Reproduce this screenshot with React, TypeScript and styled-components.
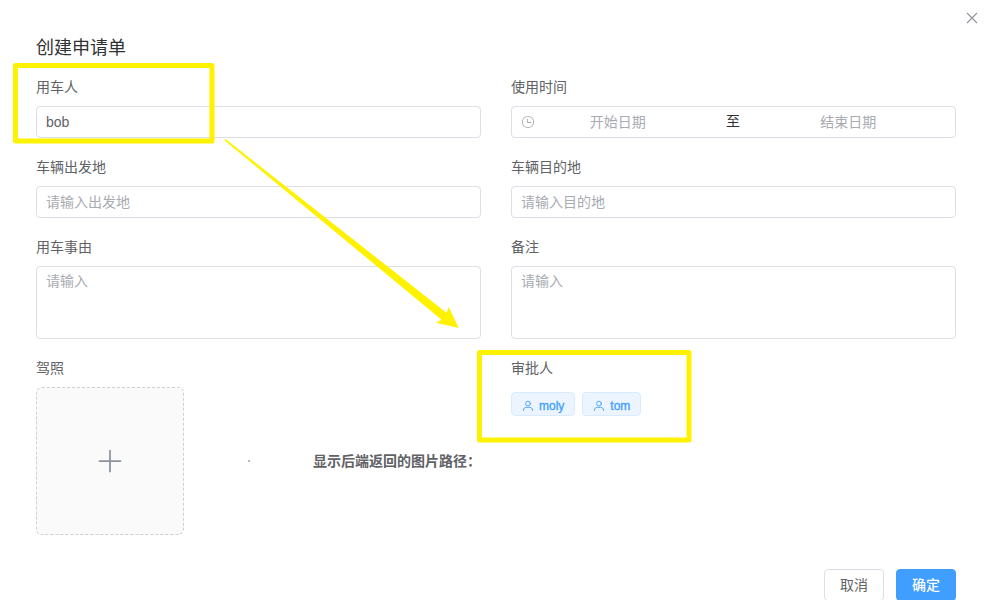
import React from 'react';
import styled, { createGlobalStyle, css } from 'styled-components';

const GlobalStyle = createGlobalStyle`
  *, *::before, *::after { box-sizing: border-box; }
  body {
    margin: 0;
    background: #fff;
    color: #606266;
    font-family: "Liberation Sans", "Noto Sans CJK SC", sans-serif;
    font-size: 14px;
  }
  button, input, textarea { font: inherit; }
`;

const Dialog = styled.main`
  position: relative;
  height: 100vh;
  overflow: hidden;
  padding: 28px 29px 0 36px;
`;

const CloseButton = styled.button`
  position: absolute;
  top: 10px;
  right: 5px;
  display: flex;
  padding: 0;
  border: 0;
  background: none;
  color: #909399;
  cursor: pointer;
`;

const Title = styled.h1`
  margin: 0;
  color: #303133;
  font-size: 18px;
  font-weight: 400;
  line-height: 40px;
`;

const Form = styled.form`
  display: grid;
  grid-template-columns: 1fr 1fr;
  gap: 10px 30px;
`;

const Field = styled.div`
  min-width: 0;
`;

const labelStyle = css`
  display: block;
  line-height: 38px;
`;

const Label = styled.label`
  ${labelStyle}
`;

const GroupLabel = styled.div`
  ${labelStyle}
`;

const boxStyle = css`
  width: 100%;
  border: 1px solid #dcdfe6;
  border-radius: 4px;
  background: #fff;
  color: #606266;
`;

const Input = styled.input`
  ${boxStyle}
  display: block;
  height: 32px;
  padding: 0 9px;
  outline: none;
  &::placeholder { color: #a8abb2; }
`;

const TextArea = styled.textarea`
  ${boxStyle}
  display: block;
  height: 73px;
  padding: 4px 9px;
  line-height: 21px;
  outline: none;
  resize: none;
  &::placeholder { color: #a8abb2; }
`;

const DateRange = styled.div`
  ${boxStyle}
  display: flex;
  align-items: center;
  height: 32px;
  padding: 0 10px 0 9px;
`;

const IconSlot = styled.span`
  display: flex;
  flex: none;
  width: 14px;
  color: #a8abb2;
`;

const DateInput = styled.input`
  width: 39%;
  height: 30px;
  padding: 0;
  border: 0;
  outline: none;
  background: none;
  text-align: center;
  &::placeholder { color: #a8abb2; }
`;

const Separator = styled.span`
  flex: 1;
  color: #303133;
  line-height: 28px;
  padding-bottom: 2px;
  text-align: center;
`;

const UploadRow = styled.div`
  display: flex;
  align-items: center;
  justify-content: space-between;
`;

const UploadBox = styled.label`
  display: flex;
  align-items: center;
  justify-content: center;
  width: 148px;
  height: 148px;
  border: 1px dashed #cdd0d6;
  border-radius: 6px;
  background: #fafafa;
  color: #8c939d;
  cursor: pointer;
`;

const FileInput = styled.input`
  position: absolute;
  width: 1px;
  height: 1px;
  opacity: 0;
`;

const Dot = styled.span`
  width: 2px;
  height: 2px;
  border-radius: 1px;
  background: #a0a2a6;
`;

const PathText = styled.strong`
  padding-bottom: 2px;
  font-weight: 700;
`;

const Tags = styled.div`
  display: flex;
  gap: 7px;
  padding-top: 5px;
`;

const Tag = styled.span`
  display: inline-flex;
  align-items: center;
  gap: 5px;
  height: 24px;
  padding: 3px 10px 0 10px;
  border: 1px solid #d9ecff;
  border-radius: 4px;
  background: #ecf5ff;
  color: #409eff;
  font-size: 12px;
  -webkit-text-stroke: 0.3px #409eff;
`;

const Footer = styled.footer`
  display: flex;
  justify-content: flex-end;
  gap: 12px;
  padding-top: 34px;
`;

const Button = styled.button<{ $primary?: boolean }>`
  height: 32px;
  padding: 0 15px 2px;
  border: 1px solid ${(p) => (p.$primary ? '#409eff' : '#dcdfe6')};
  border-radius: 4px;
  background: ${(p) => (p.$primary ? '#409eff' : '#fff')};
  color: ${(p) => (p.$primary ? '#fff' : '#606266')};
  font-weight: ${(p) => (p.$primary ? 500 : 400)};
  cursor: pointer;
`;

const Markup = styled.svg`
  position: absolute;
  top: 0;
  left: 0;
  pointer-events: none;
`;

const CloseIcon = () => (
  <svg width="16" height="16" viewBox="0 0 16 16" fill="none" stroke="currentColor" strokeWidth="1.1">
    <path d="M3 3 13 13M13 3 3 13" />
  </svg>
);

const ClockIcon = () => (
  <svg width="14" height="14" viewBox="0 0 1024 1024" fill="currentColor">
    <path d="M512 896a384 384 0 1 0 0-768 384 384 0 0 0 0 768m0 64a448 448 0 1 1 0-896 448 448 0 0 1 0 896" />
    <path d="M480 256a32 32 0 0 1 32 32v256a32 32 0 0 1-64 0V288a32 32 0 0 1 32-32" />
    <path d="M480 512h256q32 0 32 32t-32 32H480q-32 0-32-32t32-32" />
  </svg>
);

const PlusIcon = () => (
  <svg width="28" height="28" viewBox="0 0 1024 1024" fill="currentColor">
    <path d="M480 480V128a32 32 0 0 1 64 0v352h352a32 32 0 1 1 0 64H544v352a32 32 0 1 1-64 0V544H128a32 32 0 0 1 0-64z" />
  </svg>
);

const UserIcon = () => (
  <svg width="12" height="12" viewBox="0 0 12 12" fill="none" stroke="currentColor" strokeWidth="0.9" strokeLinecap="round">
    <circle cx="6" cy="3.6" r="2.4" />
    <path d="M1.5 10.6V10.2C1.5 8.4 2.7 7.4 4.3 7.4H7.7C9.3 7.4 10.5 8.4 10.5 10.2V10.6" />
  </svg>
);

const approvers = ['moly', 'tom'];

export default function App() {
  return (
    <>
      <GlobalStyle />
      <Dialog lang="zh-CN">
        <CloseButton type="button" aria-label="关闭"><CloseIcon /></CloseButton>
        <Title>创建申请单</Title>
        <Form>
          <Field>
            <Label htmlFor="user">用车人</Label>
            <Input id="user" defaultValue="bob" />
          </Field>
          <Field>
            <Label htmlFor="start">使用时间</Label>
            <DateRange>
              <IconSlot><ClockIcon /></IconSlot>
              <DateInput id="start" placeholder="开始日期" />
              <Separator>至</Separator>
              <DateInput aria-label="结束日期" placeholder="结束日期" />
              <IconSlot />
            </DateRange>
          </Field>
          <Field>
            <Label htmlFor="from">车辆出发地</Label>
            <Input id="from" placeholder="请输入出发地" />
          </Field>
          <Field>
            <Label htmlFor="to">车辆目的地</Label>
            <Input id="to" placeholder="请输入目的地" />
          </Field>
          <Field>
            <Label htmlFor="reason">用车事由</Label>
            <TextArea id="reason" placeholder="请输入" />
          </Field>
          <Field>
            <Label htmlFor="remark">备注</Label>
            <TextArea id="remark" placeholder="请输入" />
          </Field>
          <Field>
            <Label htmlFor="license">驾照</Label>
            <UploadRow>
              <UploadBox>
                <FileInput id="license" type="file" accept="image/*" />
                <PlusIcon />
              </UploadBox>
              <Dot />
              <PathText>显示后端返回的图片路径：</PathText>
            </UploadRow>
          </Field>
          <Field>
            <GroupLabel>审批人</GroupLabel>
            <Tags>
              {approvers.map((name) => (
                <Tag key={name}><UserIcon />{name}</Tag>
              ))}
            </Tags>
          </Field>
        </Form>
        <Footer>
          <Button type="button">取消</Button>
          <Button type="button" $primary>确定</Button>
        </Footer>
        <Markup width="700" height="450" viewBox="0 0 700 450" aria-hidden="true">
          <g fill="none" stroke="#fff200" strokeWidth="5" strokeLinejoin="round">
            <rect x="15.5" y="65.5" width="196.5" height="75.5" />
            <rect x="479.5" y="352.5" width="209.5" height="87.5" />
          </g>
          <path fill="#fff200" d="M224 140 225.5 139 446.5 312.7 448.7 307 458.8 328 436 322.7 441.5 319.7Z" />
        </Markup>
      </Dialog>
    </>
  );
}
